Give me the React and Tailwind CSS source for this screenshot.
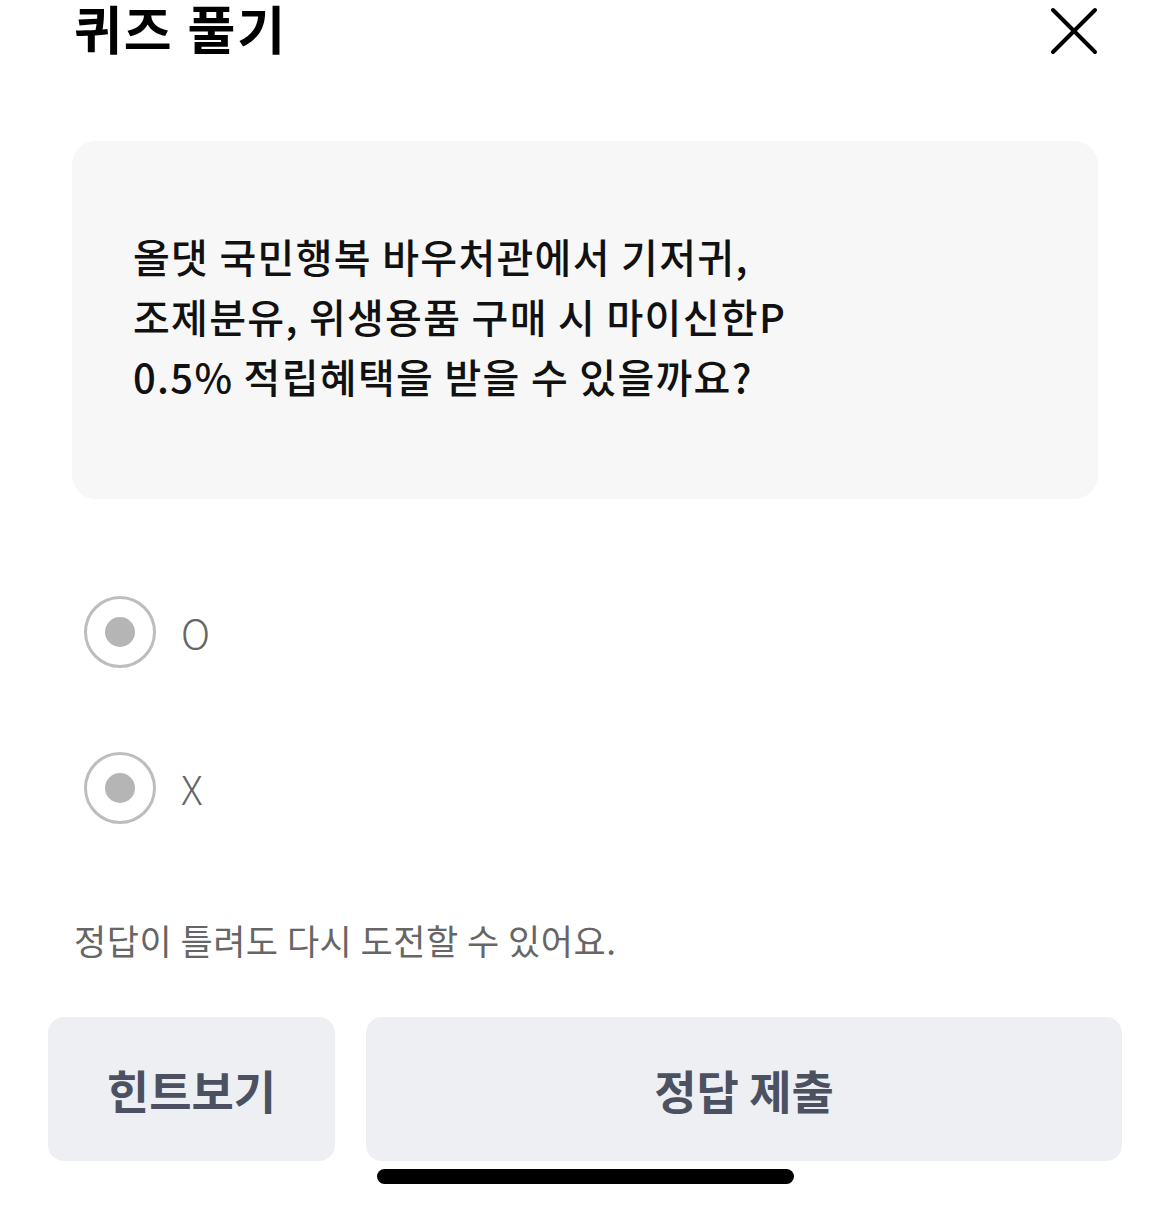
import React, { useState } from "react";

const FONT = { fontFamily: '"Noto Sans CJK KR", "Noto Sans", sans-serif' };

const CloseIcon = () => (
  <svg width="48" height="48" viewBox="0 0 48 48" fill="none">
    <path d="M3 3L45 45M45 3L3 45" stroke="#000" strokeWidth="4" strokeLinecap="round" />
  </svg>
);

const Radio = ({ label, onClick }) => (
  <button onClick={onClick} className="flex items-center gap-[25px] h-[72px]">
    <span className="flex h-[72px] w-[72px] items-center justify-center rounded-full border-[3px] border-[#bdbdbd]">
      <span className="h-[30px] w-[30px] rounded-full bg-[#b5b5b5]" />
    </span>
    <span className="text-[40px] font-light leading-none text-[#666]">{label}</span>
  </button>
);

export default function App() {
  const [answer, setAnswer] = useState(null);

  return (
    <div style={FONT} className="relative flex h-[1207px] w-[1170px] flex-col overflow-hidden bg-white">
      <div className="flex h-[60px] items-start justify-between pl-[74px] pr-[72px]">
        <h1 className="text-[52px] font-bold leading-[56px] tracking-[2px] text-black">퀴즈 풀기</h1>
        <button className="mt-[7px]">
          <CloseIcon />
        </button>
      </div>

      <div className="mx-[72px] mt-[81px] flex h-[358px] items-center rounded-[24px] bg-[#f7f7f7] px-[61px] pb-[8px]">
        <p className="text-[40px] font-medium leading-[60px] tracking-[1.3px] text-[#111]">
          올댓 국민행복 바우처관에서 기저귀,
          <br />
          조제분유, 위생용품 구매 시 마이신한P
          <br />
          0.5% 적립혜택을 받을 수 있을까요?
        </p>
      </div>

      <div className="mt-[97px] flex flex-col gap-[84px] pl-[84px]">
        <Radio label="O" onClick={() => setAnswer("O")} />
        <Radio label="X" onClick={() => setAnswer("X")} />
      </div>

      <p className="mt-[94px] pl-[74px] text-[35px] leading-[44px] tracking-[0.5px] text-[#666]">
        정답이 틀려도 다시 도전할 수 있어요.
      </p>

      <div className="mt-[55px] flex gap-[31px] px-[48px]">
        <button className="flex h-[144px] w-[287px] items-center justify-center rounded-[16px] bg-[#eeeff3] text-[46px] font-semibold text-[#4b5161]">
          힌트보기
        </button>
        <button className="flex h-[144px] flex-1 items-center justify-center rounded-[16px] bg-[#eeeff3] text-[46px] font-semibold text-[#4b5161]">
          정답 제출
        </button>
      </div>

      <div className="mx-auto mt-[8px] h-[15px] w-[417px] rounded-full bg-black" />
    </div>
  );
}
